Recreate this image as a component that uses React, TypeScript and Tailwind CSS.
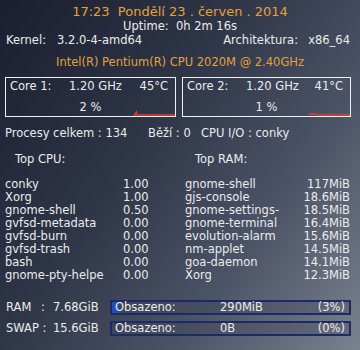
const topCpu = [
  ['conky', '1.00'],
  ['Xorg', '1.00'],
  ['gnome-shell', '0.50'],
  ['gvfsd-metadata', '0.00'],
  ['gvfsd-burn', '0.00'],
  ['gvfsd-trash', '0.00'],
  ['bash', '0.00'],
  ['gnome-pty-helpe', '0.00'],
]

const topRam = [
  ['gnome-shell', '117MiB'],
  ['gjs-console', '18.6MiB'],
  ['gnome-settings-', '18.5MiB'],
  ['gnome-terminal', '16.4MiB'],
  ['evolution-alarm', '15.6MiB'],
  ['nm-applet', '14.5MiB'],
  ['goa-daemon', '14.1MiB'],
  ['Xorg', '12.3MiB'],
]

function CoreBox({ name, freq, temp, load, graph, width }: { name: string; freq: string; temp: string; load: string; graph: string; width: string }) {
  return (
    <div className={`relative h-[40px] border-[1.5px] border-[#f0f0f0] ${width}`}>
      <div className="flex items-center pl-[4px] pr-[7px] pt-[2px] leading-[13px]">
        <span className="w-[59px]">{name}</span>
        <span>{freq}</span>
        <span className="ml-auto">{temp}</span>
      </div>
      <div className="mt-[8px] text-center leading-[13px]">{load}</div>
      <svg className="absolute bottom-0 left-0" width="100%" height="8" viewBox="0 0 170 8" preserveAspectRatio="none">
        <polyline points={graph} fill="none" stroke="#e0402a" strokeWidth="1.5" />
      </svg>
    </div>
  )
}

function MemBar({ used, pct, fill }: { used: string; pct: string; fill: number }) {
  return (
    <div className="relative h-[15px] w-[241px] border-2 border-[#1c2a66] bg-[#3a4256]/30">
      <div className="absolute inset-y-0 left-0 bg-[#1f4fb4]" style={{ width: `${fill}%` }} />
      <div className="relative flex items-center pl-[3px] pr-[4px] leading-[11px]">
        <span className="w-[105px]">Obsazeno:</span>
        <span>{used}</span>
        <span className="ml-auto">{pct}</span>
      </div>
    </div>
  )
}

export default function App() {
  return (
    <div className="h-[350px] w-[360px] overflow-hidden bg-[linear-gradient(125deg,#1a1f2f_0%,#2f3648_40%,#4c5467_70%,#7a828f_100%)] font-['DejaVu_Sans',sans-serif] text-[11.5px] text-[#ececec]">
      {/* Header */}
      <div className="pt-[4px] text-center text-[13px] leading-[16px] text-[#e3a23c]">17:23&nbsp; Pondělí 23 . červen . 2014</div>
      <div className="text-center leading-[13px]">Uptime:&nbsp; 0h 2m 16s</div>
      <div className="flex pl-[6px] pr-[10px] pt-[1px] leading-[13px]">
        <span className="w-[51px]">Kernel:</span>
        <span>3.2.0-4-amd64</span>
        <span className="ml-auto w-[85px]">Architektura:</span>
        <span>x86_64</span>
      </div>
      <div className="mt-[9px] text-center leading-[13px] text-[#e3a23c]">Intel(R) Pentium(R) CPU 2020M @ 2.40GHz</div>

      {/* Cores */}
      <div className="mt-[8px] flex gap-[6px] pl-[5px]">
        <CoreBox name="Core 1:" freq="1.20 GHz" temp="45°C" load="2 %" width="w-[171px]" graph="128,7 130,7 131,4 132,7 170,7" />
        <CoreBox name="Core 2:" freq="1.20 GHz" temp="41°C" load="1 %" width="w-[169px]" graph="128,6 134,6 138,7 170,7" />
      </div>

      {/* Processes */}
      <div className="mt-[10px] flex pl-[5px] leading-[13px]">
        <span className="w-[143px]">Procesy celkem : 134</span>
        <span className="w-[53px]">Běží : 0</span>
        <span>CPU I/O : conky</span>
      </div>

      <div className="mt-[13px] flex leading-[13px]">
        <span className="w-[195px] pl-[15px]">Top CPU:</span>
        <span>Top RAM:</span>
      </div>

      {/* Top lists */}
      <div className="mt-[12px] flex leading-[13px]">
        <div className="w-[180px] pl-[5px]">
          {topCpu.map(([n, v]) => (
            <div key={n} className="flex">
              <span className="w-[118px]">{n}</span>
              <span>{v}</span>
            </div>
          ))}
        </div>
        <div className="w-[170px] pl-[5px]">
          {topRam.map(([n, v]) => (
            <div key={n} className="flex justify-between">
              <span>{n}</span>
              <span>{v}</span>
            </div>
          ))}
        </div>
      </div>

      {/* Memory */}
      <div className="mt-[17px] flex flex-col gap-[4px] pl-[5px]">
        <div className="flex items-center">
          <span className="w-[36px] pl-[1px]">RAM</span>
          <span className="w-[12px]">:</span>
          <span className="w-[57px]">7.68GiB</span>
          <MemBar used="290MiB" pct="(3%)" fill={3} />
        </div>
        <div className="flex items-center">
          <span className="w-[48px] pl-[1px]">SWAP :</span>
          <span className="w-[57px]">15.6GiB</span>
          <MemBar used="0B" pct="(0%)" fill={0} />
        </div>
      </div>
    </div>
  )
}
